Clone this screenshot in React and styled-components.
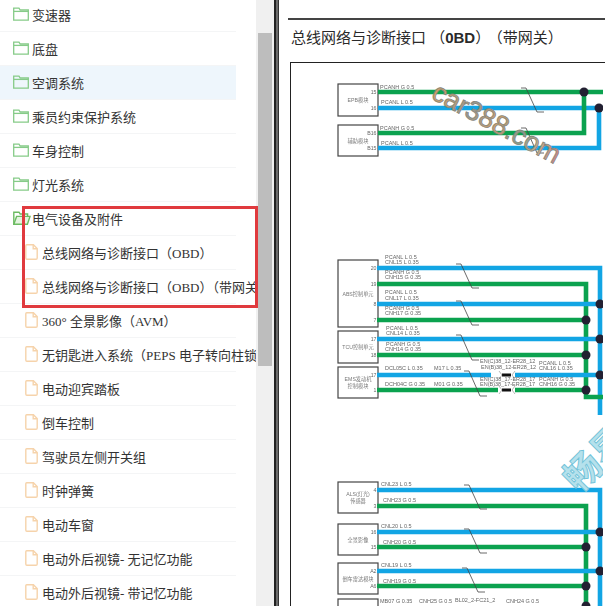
import styled, { createGlobalStyle } from "styled-components"

const GlobalStyle = createGlobalStyle`
html, body {
    margin: 0;
    padding: 0;
    background: #fff;
    overflow: hidden;
}
`

const treeItems = [
    { name: "变速器", type: "folder" },
    { name: "底盘", type: "folder" },
    { name: "空调系统", type: "folder", active: true },
    { name: "乘员约束保护系统", type: "folder" },
    { name: "车身控制", type: "folder" },
    { name: "灯光系统", type: "folder" },
    { name: "电气设备及附件", type: "open" },
    { name: "总线网络与诊断接口（OBD）", type: "file" },
    { name: "总线网络与诊断接口（OBD）（带网关）", type: "file" },
    { name: "360° 全景影像（AVM）", type: "file" },
    { name: "无钥匙进入系统（PEPS 电子转向柱锁）", type: "file" },
    { name: "电动迎宾踏板", type: "file" },
    { name: "倒车控制", type: "file" },
    { name: "驾驶员左侧开关组", type: "file" },
    { name: "时钟弹簧", type: "file" },
    { name: "电动车窗", type: "file" },
    { name: "电动外后视镜- 无记忆功能", type: "file" },
    { name: "电动外后视镜- 带记忆功能", type: "file" },
]

const FolderIcon = () => (
    <svg width="16" height="14" viewBox="0 0 16 14" fill="none" stroke="#86cb88" strokeWidth="1.3">
        <path d="M0.7 13.2V1.2H6L7.2 3H15.3V13.2Z" />
        <path d="M0.7 4.4H15.3" />
    </svg>
)

const OpenFolderIcon = () => (
    <svg width="18" height="14" viewBox="0 0 18 14" fill="none" stroke="#6cbb62" strokeWidth="1.4">
        <path d="M0.8 13.2V1.2H6L7.2 3H14.6V5.4" />
        <path d="M0.8 13.2L3.6 5.4H17L14.4 13.2Z" fill="#e4f4df" />
    </svg>
)

const FileIcon = () => (
    <svg width="13" height="16" viewBox="0 0 13 16" fill="none" stroke="#f6d3ab" strokeWidth="1.4">
        <path d="M1.7 0.8H8.4L12.2 4.6V14C12.2 14.7 11.7 15.2 11 15.2H1.9C1.2 15.2 0.8 14.7 0.8 14V1.7C0.8 1.2 1.2 0.8 1.7 0.8Z" />
        <path d="M8.2 0.8V4.8H12.2" />
    </svg>
)

const wires = [
    // top group
    { c: "g", d: "M379 92H605" },
    { c: "b", d: "M379 108H605" },
    { c: "g", d: "M379 133H585V92" },
    { c: "b", d: "M379 148H600V108" },
    // ABS / TCU / EMS group
    { c: "b", d: "M378 268H601V415" },
    { c: "g", d: "M378 284H587V397H605" },
    { c: "b", d: "M378 304H605" },
    { c: "g", d: "M378 320H587" },
    { c: "b", d: "M378 339H605" },
    { c: "g", d: "M378 355H587" },
    { c: "b", d: "M378 375H492" },
    { c: "b", d: "M516 375H605" },
    { c: "g", d: "M378 390H499" },
    { c: "g", d: "M516 390H587" },
    // bottom group
    { c: "b", d: "M378 490H601V606" },
    { c: "g", d: "M378 506H587V606" },
    { c: "b", d: "M378 532H605" },
    { c: "g", d: "M378 547H587" },
    { c: "b", d: "M378 571H605" },
    { c: "g", d: "M378 586H587" },
]

const joints = [
    [585, 92], [600, 108],
    [601, 304], [587, 320], [601, 339], [587, 355], [601, 375], [587, 390],
    [601, 532], [587, 547], [601, 571], [587, 586], [587, 606],
]

const breaks = [
    [522, 88, 24], [522, 128, 25],
    [457, 264, 24], [457, 301, 24], [457, 335, 25], [465, 371, 25],
    [465, 485, 24], [465, 529, 24], [463, 568, 24],
]

const modules = [
    { y: 84, h: 32, lines: ["EPB模块"], pins: [["15", 94], ["16", 110]] },
    { y: 125, h: 31, lines: ["辅助模块"], pins: [["B16", 135], ["B15", 150]] },
    { y: 260, h: 67, lines: ["ABS控制单元"], pins: [["20", 270], ["19", 286], ["8", 306], ["7", 322]] },
    { y: 331, h: 32, lines: ["TCU控制单元"], pins: [["17", 341], ["18", 357]] },
    { y: 367, h: 31, lines: ["EMS发动机", "控制模块"], pins: [["17", 377], ["1", 392]] },
    { y: 482, h: 31, lines: ["ALS(灯光)", "传感器"], pins: [["4", 492], ["3", 508]] },
    { y: 524, h: 31, lines: ["全景影像"], pins: [["16", 534], ["15", 549]] },
    { y: 563, h: 31, lines: ["倒车雷达模块"], pins: [["A2", 573], ["A6", 588]] },
    { y: 599, h: 30, lines: [], pins: [] },
]

const labels = [
    ["PCANH G 0.5", 381, 89], ["PCANL L 0.5", 382, 104], ["PCANH G 0.5", 381, 130], ["PCANL L 0.5", 382, 145],
    ["PCANL L 0.5", 386, 259], ["CNL15 L 0.35", 386, 264], ["PCANH G 0.5", 386, 274], ["CNH15 G 0.35", 386, 279],
    ["PCANL L 0.5", 386, 294], ["CNL17 L 0.35", 386, 300], ["PCANH G 0.5", 386, 310], ["CNH17 G 0.35", 386, 315],
    ["PCANL L 0.5", 387, 330], ["CNL14 L 0.35", 387, 335], ["PCANH G 0.5", 387, 346], ["CNH14 G 0.35", 386, 351],
    ["DCL05C L 0.35", 386, 370], ["M17 L 0.35", 435, 370], ["DCH04C G 0.35", 386, 386], ["M01 G 0.35", 435, 386],
    ["EN(C)38_12-ER28_12", 481, 363], ["EN(B)38_12-ER28_12", 482, 369], ["EN(C)38_17-ER28_17", 481, 381], ["EN(B)38_17-ER28_17", 481, 386],
    ["PCANL L 0.5", 540, 365], ["CNL16 L 0.35", 540, 370], ["PCANH G 0.5", 540, 381], ["CNH16 G 0.35", 540, 386],
    ["CNL23 L 0.5", 382, 486], ["CNH23 G 0.5", 384, 502], ["CNL20 L 0.5", 382, 528], ["CNH20 G 0.5", 384, 544],
    ["CNL19 L 0.5", 382, 567], ["CNH19 G 0.5", 384, 583],
    ["MB07 G 0.35", 381, 603], ["CNH25 G 0.5", 420, 603], ["BL02_2-FC21_2", 456, 602], ["CNH24 G 0.5", 507, 603],
]

const Diagram = () => (
    <DiagramSvg width="312" height="543" viewBox="292 63 312 543">
        <defs>
            <linearGradient id="mark" x1="0" y1="0" x2="1" y2="0">
                <stop offset="0" stopColor="#d9a05f" />
                <stop offset="0.3" stopColor="#9a9a90" />
                <stop offset="0.5" stopColor="#cf9f6c" />
                <stop offset="0.7" stopColor="#84a08f" />
                <stop offset="0.85" stopColor="#c9ae8a" />
                <stop offset="1" stopColor="#cc8585" />
            </linearGradient>
        </defs>
        <SoftLines>
            {modules.map((m) => (
                <g key={m.y}>
                    <rect x="339" y={m.y} width="40" height={m.h} fill="#fff" stroke="#444" strokeWidth="1.2" />
                    {m.lines.map((line, i) => (
                        <text key={line} x="359" y={m.y + m.h / 2 + 2 + (i - (m.lines.length - 1) / 2) * 7}
                            textAnchor="middle" fontSize="5.2" fill="#777" fontFamily="Liberation Sans, Noto Sans CJK SC, sans-serif">{line}</text>
                    ))}
                    {m.pins.map(([pin, y]) => (
                        <text key={pin + y} x="377.5" y={y} textAnchor="end" fontSize="5.2" fill="#666" fontFamily="Liberation Sans, sans-serif">{pin}</text>
                    ))}
                </g>
            ))}
            {wires.map((w) => (
                <path key={w.d} d={w.d} fill="none" stroke={w.c === "g" ? "#0ba24f" : "#12a5e4"} strokeWidth="4.6" />
            ))}
            {[375, 390].map((y) => (
                <g key={y}>
                    <rect x="503" y={y - 1.5} width="9" height="3" fill="#111" />
                    <path d={`M500 ${y - 4}L503 ${y}L500 ${y + 4}M516 ${y - 4}L513 ${y}L516 ${y + 4}`} fill="none" stroke="#888" strokeWidth="0.6" />
                </g>
            ))}
            {joints.map(([x, y]) => (
                <circle key={x + "-" + y} cx={x} cy={y} r="4.5" fill="#232032" />
            ))}
            {breaks.map(([x, y, h]) => (
                <path key={x + "-" + y} d={`M${x} ${y}h5L${x + 16} ${y + h}h7`} fill="none" stroke="#444" strokeWidth="0.8" />
            ))}
            {labels.map(([t, x, y]) => (
                <text key={t + x + y} x={x} y={y} fontSize="5.5" fill="#666" fontFamily="Liberation Sans, sans-serif">{t}</text>
            ))}
        </SoftLines>
        <text x="431" y="98" transform="rotate(28 431 98)" fontSize="27" fill="url(#mark)" stroke="#85857c" strokeWidth="0.8"
            fontFamily="Liberation Sans, sans-serif">car388.com</text>
        <text x="580" y="494" transform="rotate(-45 580 494)" fontSize="37" fontWeight="700" fill="#b5e1ec" stroke="#70c2d8"
            strokeWidth="0.9" fontFamily="Noto Sans CJK SC, sans-serif">畅易</text>
    </DiagramSvg>
)

const App = () => {
    return (
        <Page>
            <GlobalStyle />
            <TreePane>
                <TreeList>
                    {treeItems.map((item) => (
                        <TreeRow key={item.name} $type={item.type} $active={item.active}>
                            {item.type === "folder" && <FolderIcon />}
                            {item.type === "open" && <OpenFolderIcon />}
                            {item.type === "file" && <FileIcon />}
                            <span>{item.name}</span>
                        </TreeRow>
                    ))}
                </TreeList>
            </TreePane>
            <ScrollTrack>
                <ScrollThumb />
            </ScrollTrack>
            <Divider />
            <DocPane>
                <DocRule />
                <DocTitle>总线网络与诊断接口 （<b>0BD</b>）<span>（带网关）</span></DocTitle>
                <DiagramFrame>
                    <Diagram />
                </DiagramFrame>
            </DocPane>
            <Highlight />
        </Page>
    )
}

export default App

const rowGaps = { folder: "3px", open: "1px", file: "4px" }

const Page = styled.div`
position: relative;
display: flex;
width: 605px;
height: 606px;
overflow: hidden;
background: #fff;
font-family: "Liberation Serif", "Noto Sans CJK SC", sans-serif;
`
const TreePane = styled.div`
flex: 0 0 256px;
overflow: hidden;
`
const TreeList = styled.div`
margin-top: -2px;
`
const TreeRow = styled.div`
display: flex;
align-items: center;
box-sizing: border-box;
width: 236px;
height: 34px;
padding-left: ${(p) => (p.$type === "file" ? "25px" : "13px")};
padding-bottom: 1px;
gap: ${(p) => rowGaps[p.$type]};
border-bottom: 1px solid #f4f5f6;
background: ${(p) => (p.$active ? "#eef6fc" : "transparent")};
color: #333;
font-size: 13px;
white-space: nowrap;
svg {
    flex: none;
}
`
const Highlight = styled.div`
position: absolute;
left: 22px;
top: 206px;
box-sizing: border-box;
width: 236px;
height: 102px;
border: 3px solid #e03a3e;
pointer-events: none;
`
const ScrollTrack = styled.div`
flex: 0 0 18px;
background: #f0f0f0;
padding: 33px 2px 0;
box-sizing: border-box;
`
const ScrollThumb = styled.div`
width: 14px;
height: 333px;
background: #bdbdbd;
`
const Divider = styled.div`
flex: 0 0 5px;
box-sizing: border-box;
background: #6b6b6b;
border-left: 2px solid #222;
border-right: 1px solid #333;
`
const DocPane = styled.div`
flex: 1;
min-width: 0;
padding-top: 18px;
color: #222;
`
const DocRule = styled.div`
height: 2px;
margin-left: 9px;
background: #444;
`
const DocTitle = styled.div`
height: 42px;
margin-left: 12px;
padding-top: 8px;
box-sizing: border-box;
font-family: "Liberation Sans", "Noto Sans CJK SC", sans-serif;
font-size: 15px;
line-height: 20px;
white-space: nowrap;
color: #2a2a2a;
b {
    font-weight: 700;
}
span {
    margin-left: 5px;
}
`
const DiagramFrame = styled.div`
margin-left: 11px;
border-top: 1px solid #222;
border-left: 1px solid #222;
height: 544px;
overflow: hidden;
`
const DiagramSvg = styled.svg`
display: block;
`
const SoftLines = styled.g`
filter: blur(0.4px);
`
